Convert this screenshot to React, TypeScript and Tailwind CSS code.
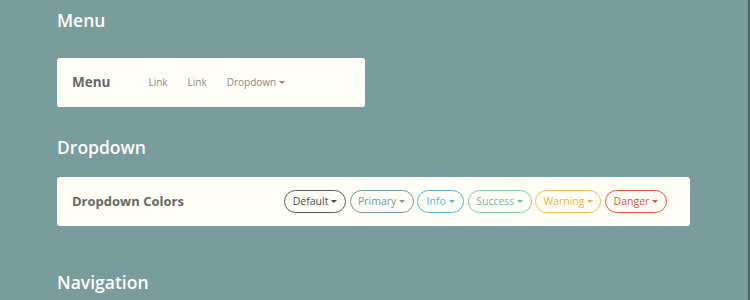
const buttons = [
  { label: "Default", cls: "border-[#5a5a5a] text-[#4a4a4a] w-[62px]" },
  { label: "Primary", cls: "border-[#6f9a9e] text-[#6f9a9e] w-[64px]" },
  { label: "Info", cls: "border-[#5ab4cf] text-[#5ab4cf] w-[47px]" },
  { label: "Success", cls: "border-[#7fcaa6] text-[#6cbf97] w-[64px]" },
  { label: "Warning", cls: "border-[#f5bb45] text-[#f2b13a] w-[66px]" },
  { label: "Danger", cls: "border-[#e9573c] text-[#e34f34] w-[62px]" },
];

const Caret = () => (
  <span className="ml-[3px] inline-block border-x-[3px] border-t-[3px] border-x-transparent border-t-current align-middle" />
);

export default function App() {
  return (
    <div
      className="h-[300px] w-full overflow-hidden border-r-2 border-[#44605f] bg-[#799c9c] pl-[57px]"
      style={{ fontFamily: '"Open Sans", "Noto Sans", sans-serif' }}
    >
      {/* Menu */}
      <h2 className="pt-[8px] text-[17.5px] leading-[24px] font-semibold text-white">Menu</h2>
      <div className="mt-[26px] flex h-[49px] w-[308px] items-center rounded-[3px] bg-[#fffff8] pl-[15px]">
        <span className="text-[13.5px] font-bold text-[#666]">Menu</span>
        <nav className="ml-[38px] flex items-center gap-[20px] text-[10px] font-medium text-[#888]">
          <span>Link</span>
          <span>Link</span>
          <span className="flex items-center">
            Dropdown
            <Caret />
          </span>
        </nav>
      </div>

      {/* Dropdown */}
      <h2 className="mt-[28px] text-[17.5px] leading-[24px] font-semibold text-white">Dropdown</h2>
      <div className="mt-[18px] flex h-[49px] w-[633px] items-center justify-between rounded-[3px] bg-[#fffff8] pr-[23px] pl-[15px]">
        <span className="text-[13px] font-bold text-[#666]">Dropdown Colors</span>
        <div className="flex items-center gap-[3.6px]">
          {buttons.map((b) => (
            <button
              key={b.label}
              className={`flex h-[23px] items-center justify-center rounded-full border-[1.5px] text-[10.5px] font-medium ${b.cls}`}
            >
              {b.label}
              <Caret />
            </button>
          ))}
        </div>
      </div>

      {/* Navigation */}
      <h2 className="mt-[44px] text-[17.5px] leading-[24px] font-semibold text-white">Navigation</h2>
    </div>
  );
}
